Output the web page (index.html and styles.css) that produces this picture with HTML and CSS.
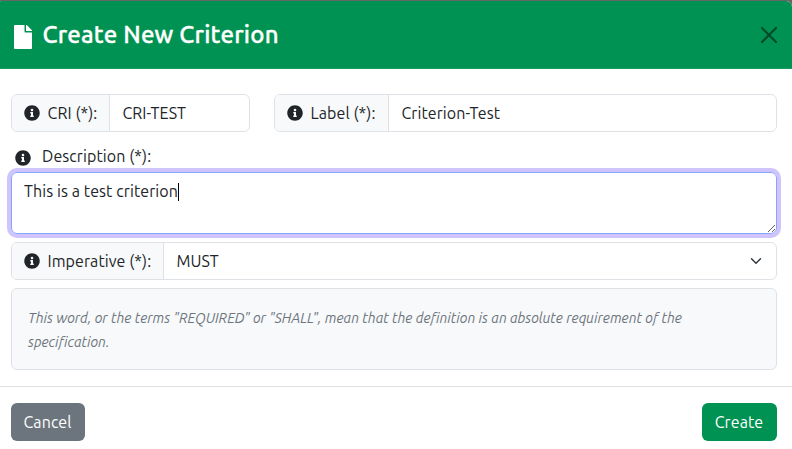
FILE: index.html
```html
<!DOCTYPE html>
<html lang="en">
<head>
<meta charset="utf-8">
<title>Create New Criterion</title>
<link rel="stylesheet" href="styles.css">
</head>
<body>
<svg class="defs" width="0" height="0" aria-hidden="true">
<symbol id="info" viewBox="0 0 512 512"><path d="M256 8C119.043 8 8 119.083 8 256c0 136.997 111.043 248 248 248s248-111.003 248-248C504 119.083 392.957 8 256 8zm0 110c23.196 0 42 18.804 42 42s-18.804 42-42 42-42-18.804-42-42 18.804-42 42-42zm56 254c0 6.627-5.373 12-12 12h-88c-6.627 0-12-5.373-12-12v-24c0-6.627 5.373-12 12-12h12v-64h-12c-6.627 0-12-5.373-12-12v-24c0-6.627 5.373-12 12-12h64c6.627 0 12 5.373 12 12v100h12c6.627 0 12 5.373 12 12v24z"/></symbol>
</svg>
<div class="modal">
  <header class="header">
    <svg class="file" viewBox="0 0 384 512"><path d="M224 136V0H24C10.700 0 0 10.700 0 24v464c0 13.300 10.700 24 24 24h336c13.300 0 24-10.700 24-24V160H248c-13.200 0-24-10.800-24-24zm160-14.100v6.100H256V0h6.100c6.400 0 12.500 2.500 17 7l97.900 98c4.500 4.500 7 10.600 7 16.900z"/></svg>
    <h1>Create New Criterion</h1>
    <svg class="close" viewBox="0 0 16 16"><path d="M.293.293a1 1 0 0 1 1.414 0L8 6.586 14.293.293a1 1 0 1 1 1.414 1.414L9.414 8l6.293 6.293a1 1 0 0 1-1.414 1.414L8 9.414l-6.293 6.293a1 1 0 0 1-1.414-1.414L6.586 8 .293 1.707a1 1 0 0 1 0-1.414z"/></svg>
  </header>
  <main class="body">
    <div class="row">
      <div class="group g-cri">
        <div class="addon a-cri"><svg class="info"><use href="#info"/></svg><span>CRI (*):</span></div>
        <div class="value"><span>CRI-TEST</span></div>
      </div>
      <div class="group g-label">
        <div class="addon a-label"><svg class="info"><use href="#info"/></svg><span>Label (*):</span></div>
        <div class="value"><span>Criterion-Test</span></div>
      </div>
    </div>
    <div class="desc"><svg class="info"><use href="#info"/></svg><span>Description (*):</span></div>
    <div class="area">This is a test criterion<i class="caret"></i></div>
    <div class="group">
      <div class="addon a-imp"><svg class="info"><use href="#info"/></svg><span>Imperative (*):</span></div>
      <div class="value"><span class="option">MUST</span><svg class="chevron" viewBox="0 0 16 16"><path d="m2 5 6 6 6-6"/></svg></div>
    </div>
    <div class="hint">This word, or the terms "REQUIRED" or "SHALL", mean that the definition is an absolute requirement of the specification.</div>
  </main>
  <footer class="footer">
    <button class="btn cancel">Cancel</button>
    <button class="btn create">Create</button>
  </footer>
</div>
</body>
</html>
```
FILE: styles.css
```css
* { box-sizing: border-box; }
body { margin: 0; background: #666; color: #212529; font: 16px/24px Ubuntu, "Noto Sans", sans-serif; letter-spacing: .09px; white-space: nowrap; overflow: hidden; }
.defs { display: block; }
.modal { height: 448px; margin-top: 1px; background: #fff; border-radius: 1px 6px 0 0; overflow: hidden; }
.header { height: 68px; background: #009252; display: flex; align-items: center; padding: 0 15px 0 14px; border-bottom: 1px solid #159b60; }
.file { width: 18px; height: 24px; fill: #fff; margin: 4px 10.5px 0 0; }
h1 { margin: 0; flex: 1; font-size: 24px; line-height: 36px; font-weight: 500; letter-spacing: .22px; color: #fff; -webkit-text-stroke: .35px #fff; }
.close { width: 16px; height: 16px; fill: #000; opacity: .5; }
.body { padding: 25px 15px 16px 11px; }
.row { display: flex; gap: 24px; }
.group { display: flex; height: 38px; border: 1px solid #dee2e6; border-radius: 6px; overflow: hidden; }
.g-cri { width: 239px; }
.g-label { flex: 1; }
.addon { display: flex; align-items: center; padding-left: 12px; background: #f8f9fa; border-right: 1px solid #dee2e6; flex: none; }
.a-cri { width: 98px; }
.a-label { width: 114px; }
.a-imp { width: 152px; }
.info { width: 16px; height: 16px; fill: #212529; margin-right: 7.5px; flex: none; }
.value { flex: 1; display: flex; align-items: center; padding: 0 12px 0 12.4px; }
.desc { display: flex; align-items: center; height: 24px; margin: 12px 0 4px 4px; }
.desc .info { margin: 4px 11px 0 0; }
.area { height: 62px; padding: 6px 12px; border: 1px solid #86a4fb; border-radius: 6px; box-shadow: 0 0 0 4px #d0c4fd; margin-bottom: 8px; overflow: hidden; resize: vertical; }
.caret { display: inline-block; width: 1px; height: 18px; background: #000; vertical-align: -4px; }
.chevron { width: 16px; height: 12px; margin-left: auto; fill: none; stroke: #343a40; stroke-width: 2; stroke-linecap: round; stroke-linejoin: round; }
.hint { margin-top: 8px; height: 82px; padding: 17px 16px; border: 1px solid #dee2e6; border-radius: 6px; background: #f8f9fa; color: #6c757d; font-size: 14px; font-style: italic; letter-spacing: .03px; white-space: normal; }
.footer { display: flex; justify-content: space-between; padding: 16px 15px 0 11px; border-top: 1px solid #dee2e6; }
.btn { height: 38px; border: 0; border-radius: 6px; padding: 0 1px 0 0; color: #fff; font: inherit; letter-spacing: .09px; }
.cancel { width: 74px; background: #6c757d; }
.create { width: 75px; background: #009252; }
```
